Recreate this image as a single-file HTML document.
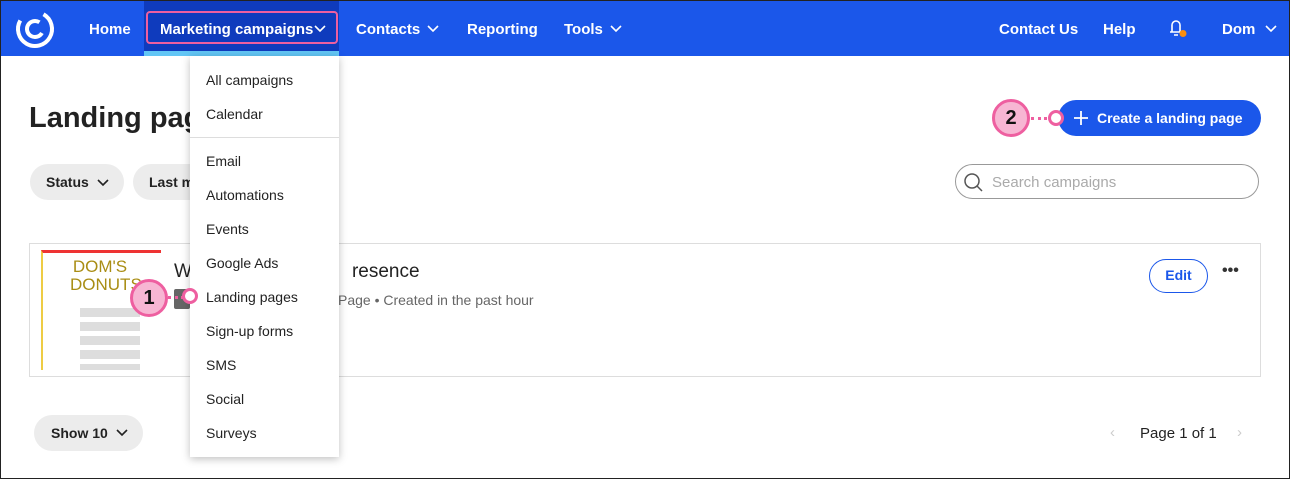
<!DOCTYPE html>
<html><head><style>
*{box-sizing:border-box;margin:0;padding:0}
body{width:1290px;height:479px;overflow:hidden;font-family:"Liberation Sans",sans-serif;background:#fff;position:relative}
.frame{position:absolute;left:0;top:0;width:1290px;height:479px;border:1px solid #222;z-index:50;pointer-events:none}
.a{position:absolute;white-space:nowrap}
.nav{left:0;top:0;width:1290px;height:56px;background:#1b57ea}
.nt{color:#fff;font-weight:bold;font-size:15px;top:21px}
.dd{left:190px;top:56px;width:149px;height:401px;background:#fff;box-shadow:0 2px 8px rgba(0,0,0,.25)}
.di{position:absolute;left:16px;font-size:14px;color:#222}
.pill{border-radius:20px;background:#ececec;font-weight:bold;font-size:14px;color:#222}
.badge{width:38px;height:38px;border-radius:50%;background:#f7b6d3;border:3px solid #ee5fa0;font-weight:bold;font-size:20px;text-align:center;line-height:32px;color:#111}
.ring{width:16px;height:16px;border-radius:50%;background:#fff;border:3px solid #ee5fa0}
.ch{position:absolute}
</style></head><body>
<div class="frame"></div>
<div class="a nav"></div>
<svg class="a" style="left:14px;top:8px" width="44" height="42" viewBox="0 0 44 42"><circle cx="21" cy="21" r="17" fill="none" stroke="#fff" stroke-width="4" stroke-dasharray="80 27" transform="rotate(-60 21 21)"/><circle cx="21" cy="21" r="8" fill="none" stroke="#fff" stroke-width="4" stroke-dasharray="38 12" transform="rotate(30 21 21)"/></svg>
<div class="a nt" style="left:89px">Home</div>
<div class="a" style="left:144px;top:0;width:195px;height:56px;background:#0f3bbd"></div>
<div class="a" style="left:144px;top:51px;width:195px;height:5px;background:#62c6f5"></div>
<div class="a" style="left:146px;top:11px;width:192px;height:33px;border:2.5px solid #ee5fa0;border-radius:4px"></div>
<div class="a nt" style="left:160px">Marketing campaigns</div>
<svg class="ch" style="left:314px;top:25px" width="12" height="8"><path d="M1 1l5 5 5-5" fill="none" stroke="#fff" stroke-width="1.6"/></svg>
<div class="a nt" style="left:356px">Contacts</div>
<svg class="ch" style="left:427px;top:25px" width="12" height="8"><path d="M1 1l5 5 5-5" fill="none" stroke="#fff" stroke-width="1.6"/></svg>
<div class="a nt" style="left:467px">Reporting</div>
<div class="a nt" style="left:564px">Tools</div>
<svg class="ch" style="left:610px;top:25px" width="12" height="8"><path d="M1 1l5 5 5-5" fill="none" stroke="#fff" stroke-width="1.6"/></svg>
<div class="a nt" style="left:999px">Contact Us</div>
<div class="a nt" style="left:1103px">Help</div>
<svg class="a" style="left:1166px;top:16px" width="24" height="24" viewBox="0 0 24 24"><path d="M4 16h12M6 16V9a4 4 0 0 1 8 0v7M8 19h4" fill="none" stroke="#fff" stroke-width="1.6"/><circle cx="17" cy="17.5" r="3.5" fill="#f98e10"/></svg>
<div class="a nt" style="left:1222px">Dom</div>
<svg class="ch" style="left:1265px;top:25px" width="12" height="8"><path d="M1 1l5 5 5-5" fill="none" stroke="#fff" stroke-width="1.6"/></svg>

<div class="a" style="left:29px;top:102px;font-size:29px;font-weight:bold;color:#222">Landing pages</div>
<div class="a pill" style="left:30px;top:164px;width:94px;height:36px;padding:10px 16px">Status</div>
<svg class="ch" style="left:97px;top:179px" width="12" height="8"><path d="M1 1l5 5 5-5" fill="none" stroke="#222" stroke-width="1.6"/></svg>
<div class="a pill" style="left:133px;top:164px;width:120px;height:36px;padding:10px 16px">Last modified</div>

<div class="a" style="left:1058px;top:100px;width:203px;height:36px;border-radius:18px;background:#1b57ea;color:#fff;font-weight:bold;font-size:14px;padding:10px 0 0 39px">Create a landing page</div>
<svg class="a" style="left:1074px;top:111px" width="14" height="14"><path d="M7 0v14M0 7h14" stroke="#fff" stroke-width="1.8"/></svg>
<div class="a badge" style="left:992px;top:99px">2</div>
<div class="a" style="left:1031px;top:117px;width:22px;border-top:3px dotted #ee5fa0"></div>
<div class="a ring" style="left:1048px;top:110px"></div>

<div class="a" style="left:955px;top:164px;width:304px;height:35px;border:1.5px solid #999;border-radius:18px"></div>
<svg class="a" style="left:963px;top:172px" width="22" height="22"><circle cx="9" cy="9" r="7" fill="none" stroke="#555" stroke-width="1.5"/><path d="M14 14l5 5" stroke="#555" stroke-width="1.5"/></svg>
<div class="a" style="left:992px;top:174px;font-size:15px;color:#aaa">Search campaigns</div>

<div class="a" style="left:29px;top:243px;width:1232px;height:134px;border:1px solid #ddd"></div>
<div class="a" style="left:41px;top:250px;width:120px;height:120px;background:#fff;border-top:3px solid #e33;border-left:2px solid #ec4"></div>
<div class="a" style="left:70px;top:258px;font-size:17px;color:#a98d14;line-height:18px;text-align:center;width:60px">DOM'S<br>DONUTS</div>
<div class="a" style="left:80px;top:308px;width:60px;height:9px;background:#ddd"></div>
<div class="a" style="left:80px;top:322px;width:60px;height:9px;background:#ddd"></div>
<div class="a" style="left:80px;top:336px;width:60px;height:9px;background:#ddd"></div>
<div class="a" style="left:80px;top:350px;width:60px;height:9px;background:#ddd"></div>
<div class="a" style="left:80px;top:364px;width:60px;height:6px;background:#ddd"></div>
<div class="a" style="left:174px;top:261px;font-size:19px;color:#222">W<span style="margin-left:160px">resence</span></div>
<div class="a" style="left:174px;top:289px;width:16px;height:20px;background:#666;border-radius:2px"></div>
<div class="a" style="left:338px;top:292px;font-size:14px;color:#666">Page • Created in the past hour</div>
<div class="a" style="left:1149px;top:259px;width:59px;height:34px;border:1.5px solid #1b57ea;border-radius:17px;color:#1b57ea;font-weight:bold;font-size:14px;text-align:center;line-height:31px">Edit</div>
<div class="a" style="left:1222px;top:262px;font-weight:bold;font-size:16px;color:#333">•••</div>

<div class="a pill" style="left:34px;top:415px;width:109px;height:36px;padding:10px 17px">Show 10</div>
<svg class="ch" style="left:116px;top:429px" width="12" height="8"><path d="M1 1l5 5 5-5" fill="none" stroke="#222" stroke-width="1.6"/></svg>
<div class="a" style="left:1110px;top:424px;color:#ccc;font-size:15px">‹</div>
<div class="a" style="left:1140px;top:425px;font-size:15px;color:#222">Page 1 of 1</div>
<div class="a" style="left:1237px;top:424px;color:#ccc;font-size:15px">›</div>

<div class="a dd">
<div class="di" style="top:16px">All campaigns</div>
<div class="di" style="top:50px">Calendar</div>
<div style="position:absolute;left:0;top:81px;width:149px;border-top:1px solid #ddd"></div>
<div class="di" style="top:97px">Email</div>
<div class="di" style="top:131px">Automations</div>
<div class="di" style="top:165px">Events</div>
<div class="di" style="top:199px">Google Ads</div>
<div class="di" style="top:233px">Landing pages</div>
<div class="di" style="top:267px">Sign-up forms</div>
<div class="di" style="top:301px">SMS</div>
<div class="di" style="top:335px">Social</div>
<div class="di" style="top:369px">Surveys</div>
</div>
<div class="a badge" style="left:130px;top:279px">1</div>
<div class="a" style="left:168px;top:296px;width:16px;border-top:3px dotted #ee5fa0"></div>
<div class="a ring" style="left:182px;top:288px"></div>
</body></html>
